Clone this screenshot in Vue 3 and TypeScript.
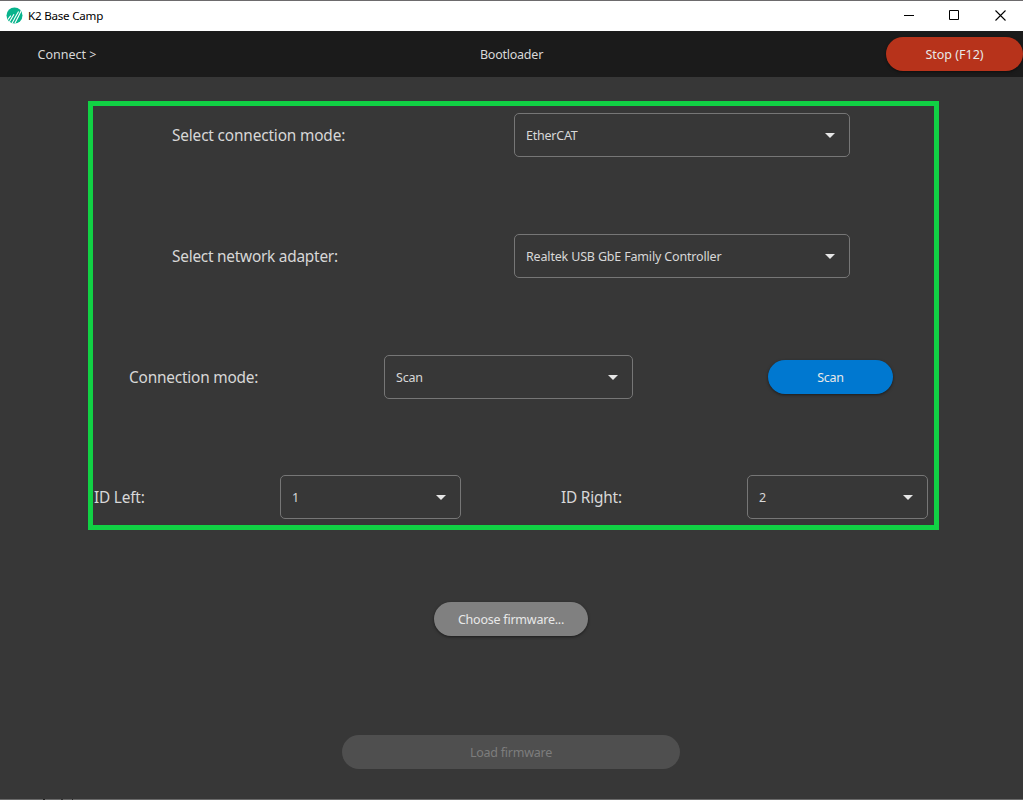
<script setup lang="ts">
import { ref } from 'vue'

interface Field {
  id: string
  label: string
  value: string
}

const adapterFields = ref<Field[]>([
  { id: 'mode', label: 'Select connection mode:', value: 'EtherCAT' },
  { id: 'adapter', label: 'Select network adapter:', value: 'Realtek USB GbE Family Controller' },
])

const idFields = ref<Field[]>([
  { id: 'left', label: 'ID Left:', value: '1' },
  { id: 'right', label: 'ID Right:', value: '2' },
])
</script>

<template>
  <div class="window">
    <header class="titlebar">
      <svg class="logo" width="17" height="17" viewBox="0 0 17 17">
        <defs>
          <clipPath id="disc"><circle cx="8.5" cy="8.5" r="8" /></clipPath>
        </defs>
        <circle cx="8.5" cy="8.5" r="8" fill="#07b38c" />
        <g clip-path="url(#disc)" stroke="#fff" stroke-width="1.1" fill="none">
          <path d="M1.2 13.3 4.8 8.6M3 15.5 8 7.2M6 16.3 8.8 11.2M8.4 11.8 12.6 4.4M8.8 16.5 12 10.3M11.8 10.8 15.3 3.6" />
        </g>
      </svg>
      <span class="app-name">K2 Base Camp</span>
      <div class="controls">
        <svg width="10" height="11" viewBox="0 0 10 11"><path d="M0 5.5h10" stroke="#000" /></svg>
        <svg width="10" height="11" viewBox="0 0 10 11"><path d="M.5.5h9v9h-9z" stroke="#000" fill="none" /></svg>
        <svg class="close" width="11" height="11" viewBox="0 0 11 11"><path d="M.5.5l10 10M10.5.5l-10 10" stroke="#000" stroke-width="1.1" /></svg>
      </div>
    </header>

    <nav class="toolbar">
      <span class="crumb">Connect &gt;</span>
      <span class="page">Bootloader</span>
      <button class="btn stop">Stop (F12)</button>
    </nav>

    <main class="content">
      <section class="panel">
        <div v-for="f in adapterFields" :key="f.id" class="row row-wide">
          <label :class="f.id">{{ f.label }}</label>
          <div class="select">
            <span :class="'value-' + f.id">{{ f.value }}</span>
            <svg width="10" height="5" viewBox="0 0 10 5"><path d="M0 0h10L5 5z" fill="#e6e6e6" /></svg>
          </div>
        </div>

        <div class="row row-scan">
          <label>Connection mode:</label>
          <div class="select">
            <span>Scan</span>
            <svg width="10" height="5" viewBox="0 0 10 5"><path d="M0 0h10L5 5z" fill="#e6e6e6" /></svg>
          </div>
          <button class="btn scan">Scan</button>
        </div>

        <div class="row row-ids">
          <div v-for="f in idFields" :key="f.id" class="id-field">
            <label>{{ f.label }}</label>
            <div class="select">
              <span>{{ f.value }}</span>
              <svg width="10" height="5" viewBox="0 0 10 5"><path d="M0 0h10L5 5z" fill="#e6e6e6" /></svg>
            </div>
          </div>
        </div>
      </section>

      <button class="btn choose">Choose firmware...</button>
      <button class="btn load" disabled>Load firmware</button>
    </main>
    <div class="edge"></div>
  </div>
</template>

<style>
body {
  margin: 0;
  overflow: hidden;
}
</style>

<style scoped>
.window {
  box-sizing: border-box;
  width: 1023px;
  height: 800px;
  display: flex;
  flex-direction: column;
  background: #373737;
  border-top: 1px solid #6d6b6d;
  font-family: "Noto Sans", "Open Sans", sans-serif;
  font-size: 12.5px;
  letter-spacing: -0.23px;
  color: #d8d8d8;
  white-space: nowrap;
}
.titlebar {
  height: 30px;
  flex: none;
  display: flex;
  align-items: center;
  background: #fff;
  color: #000;
  padding: 0 17px 0 6px;
}
.logo {
  margin-top: -1px;
}
.app-name {
  margin-left: 5px;
  margin-top: -1px;
  font-size: 11.6px;
  letter-spacing: -0.22px;
}
.controls {
  margin-left: auto;
  display: flex;
  gap: 35px;
  margin-top: -1px;
}
.close {
  margin-left: 1px;
}
.toolbar {
  height: 46px;
  flex: none;
  display: grid;
  grid-template-columns: 1fr auto 1fr;
  align-items: center;
  background: #1b1b1b;
}
.crumb {
  margin-left: 37.5px;
  letter-spacing: 0;
}
.btn {
  display: flex;
  align-items: center;
  justify-content: center;
  box-sizing: border-box;
  height: 34px;
  padding: 0;
  border: 0;
  border-radius: 17px;
  font: inherit;
  letter-spacing: inherit;
  color: #e8e8e8;
  box-shadow: 0 1px 3px rgba(0, 0, 0, 0.5);
}
.stop {
  width: 137px;
  justify-self: end;
  background: #b7331b;
  letter-spacing: 0;
}
.content {
  flex: 1;
  display: flex;
  flex-direction: column;
  align-items: center;
}
.panel {
  box-sizing: border-box;
  width: 851px;
  height: 429px;
  margin-top: 24px;
  margin-left: 4px;
  border: 5px solid #11d144;
  padding: 7px 6px 0 1px;
  display: flex;
  flex-direction: column;
  gap: 77px;
}
.row {
  flex: none;
  display: flex;
  align-items: center;
  height: 44px;
}
label {
  flex: none;
  font-size: 15.4px;
  line-height: 22px;
  letter-spacing: -0.2px;
  padding-top: 2px;
}
label.mode {
  letter-spacing: -0.16px;
}
label.adapter {
  letter-spacing: -0.24px;
}
.select {
  box-sizing: border-box;
  flex: none;
  height: 44px;
  display: flex;
  align-items: center;
  justify-content: space-between;
  border: 1px solid #767676;
  border-radius: 5px;
  padding: 0 14px 0 11px;
}
.select svg {
  margin-top: 1px;
}
.value-adapter {
  letter-spacing: -0.17px;
}
.row-wide {
  padding-left: 78px;
}
.row-wide label {
  box-sizing: border-box;
  width: 342px;
}
.row-wide .select {
  width: 336px;
}
.row-scan {
  padding-left: 35px;
}
.row-scan label {
  width: 255px;
}
.row-scan .select {
  width: 249px;
}
.scan {
  width: 125px;
  margin-left: 135px;
  background: #0078d0;
}
.row-ids {
  justify-content: space-between;
  margin-top: -1px;
}
.id-field {
  display: flex;
  align-items: center;
}
.id-field label {
  width: 186px;
}
.id-field .select {
  width: 181px;
}
.choose {
  width: 154px;
  margin-top: 72px;
  margin-right: 1px;
  background: #808080;
}
.load {
  width: 338px;
  margin-top: 99px;
  margin-right: 1px;
  background: #4f4f4f;
  color: #7d7d7d;
  box-shadow: none;
}
.edge {
  flex: none;
  height: 1px;
  background:
    linear-gradient(#222, #222) 43px 0 / 2px 1px no-repeat,
    linear-gradient(#333, #333) 61px 0 / 2px 1px no-repeat,
    linear-gradient(#2a2a2a, #2a2a2a) 72px 0 / 1px 1px no-repeat,
    #6a6a6a;
}
</style>
